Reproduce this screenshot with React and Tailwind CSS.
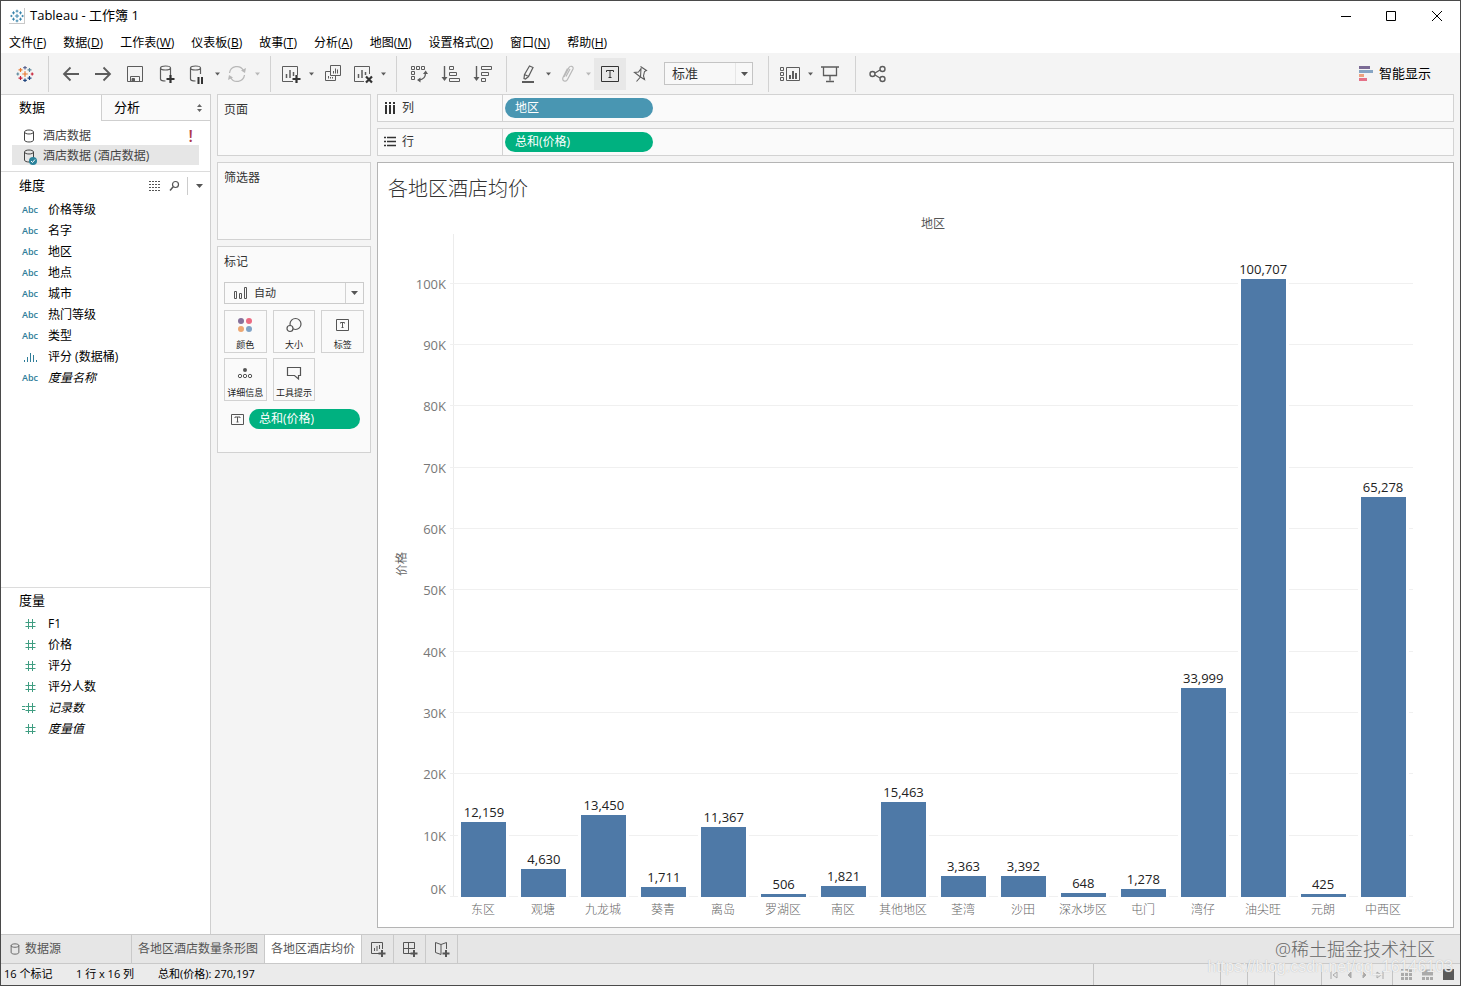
const MENUS = [
  ["文件", "F"],
  ["数据", "D"],
  ["工作表", "W"],
  ["仪表板", "B"],
  ["故事", "T"],
  ["分析", "A"],
  ["地图", "M"],
  ["设置格式", "O"],
  ["窗口", "N"],
  ["帮助", "H"],
];

const DIMENSIONS = [
  { name: "价格等级", type: "abc" },
  { name: "名字", type: "abc" },
  { name: "地区", type: "abc" },
  { name: "地点", type: "abc" },
  { name: "城市", type: "abc" },
  { name: "热门等级", type: "abc" },
  { name: "类型", type: "abc" },
  { name: "评分 (数据桶)", type: "bin" },
  { name: "度量名称", type: "abc", italic: true },
];

const MEASURES = [
  { name: "F1", type: "num" },
  { name: "价格", type: "num" },
  { name: "评分", type: "num" },
  { name: "评分人数", type: "num" },
  { name: "记录数", type: "calc", italic: true },
  { name: "度量值", type: "num", italic: true },
];

const DATA = [
  { area: "东区", price: 12159 },
  { area: "观塘", price: 4630 },
  { area: "九龙城", price: 13450 },
  { area: "葵青", price: 1711 },
  { area: "离岛", price: 11367 },
  { area: "罗湖区", price: 506 },
  { area: "南区", price: 1821 },
  { area: "其他地区", price: 15463 },
  { area: "荃湾", price: 3363 },
  { area: "沙田", price: 3392 },
  { area: "深水埗区", price: 648 },
  { area: "屯门", price: 1278 },
  { area: "湾仔", price: 33999 },
  { area: "油尖旺", price: 100707 },
  { area: "元朗", price: 425 },
  { area: "中西区", price: 65278 },
];

const AXIS_MAX = 108100;
const TICKS = [0, 10, 20, 30, 40, 50, 60, 70, 80, 90, 100];

const percent = (value) => `${(value / AXIS_MAX) * 100}%`;

function Svg({ size = 20, className = "", children }) {
  return (
    <svg
      width={size}
      height={size}
      viewBox={`0 0 ${size} ${size}`}
      fill="none"
      stroke="currentColor"
      className={`shrink-0 ${className}`}
      aria-hidden="true"
    >
      {children}
    </svg>
  );
}

// [x, y, arm length, colour index]
const PLUSES = [
  [10, 10, 3, 0],
  [5, 5.5, 2.2, 1],
  [15, 5.5, 2.2, 2],
  [5, 14.5, 2.2, 3],
  [15, 14.5, 2.2, 4],
  [10, 3, 2, 5],
  [10, 17, 2, 4],
  [2, 10, 1.6, 2],
  [18, 10, 1.6, 3],
];

function TableauLogo({ size, colors }) {
  return (
    <svg width={size} height={size} viewBox="0 0 20 20" fill="none" aria-hidden="true">
      {PLUSES.map(([x, y, r, c]) => (
        <path key={`${x}-${y}`} d={`M${x - r} ${y}h${2 * r}M${x} ${y - r}v${2 * r}`} stroke={colors[c]} strokeWidth="1.3" />
      ))}
    </svg>
  );
}

function Caret({ className = "" }) {
  return (
    <svg width="7" height="4" viewBox="0 0 7 4" className={className} aria-hidden="true">
      <path d="M0 0h7L3.5 4z" fill="currentColor" />
    </svg>
  );
}

function Cylinder({ className = "" }) {
  return (
    <Svg size={14} className={className}>
      <path d="M2.5 3v8c0 1.2 2 2 4.5 2s4.5-.8 4.5-2V3c0-1.2-2-2-4.5-2S2.5 1.800 2.5 3zM2.5 3c0 1.2 2 2 4.5 2s4.5-.8 4.5-2" />
    </Svg>
  );
}

const icons = {
  back: <path d="M18 10H3M9.5 3.5L3 10l6.5 6.5" strokeWidth="1.8" />,
  forward: <path d="M2 10h15M10.5 3.5L17 10l-6.5 6.5" strokeWidth="1.8" />,
  save: (
    <>
      <path d="M2.5 2.5h15v15h-15zM5.5 17.5v-5h9v5" />
      <path d="M7 14.5h2.5v3H7z" fill="currentColor" />
    </>
  ),
  addData: (
    <>
      <path d="M8.5 17C5 17 3.5 16 3.5 15V4M13.5 4v7M3.5 4c0-1.3 2.2-2 5-2s5 .7 5 2-2.2 2-5 2-5-.7-5-2z" strokeWidth="1.2" />
      <path d="M13.5 11v8M9.5 15h8" stroke="#333" strokeWidth="2.2" />
    </>
  ),
  pauseData: (
    <>
      <path d="M8.5 17C5 17 3.5 16 3.5 15V4M13.5 4v6M3.5 4c0-1.3 2.2-2 5-2s5 .7 5 2-2.2 2-5 2-5-.7-5-2z" strokeWidth="1.2" />
      <path d="M11.5 13v7M15 13v7" stroke="#333" strokeWidth="2" />
    </>
  ),
  refresh: (
    <>
      <path d="M2.5 9a7.5 7.5 0 0 1 14-2.5M17.5 11a7.5 7.5 0 0 1-14 2.5" strokeWidth="1.3" />
      <path d="M19 4l-1 5-4-2.5zM1 16l1-5 4 2.5z" fill="currentColor" stroke="none" />
    </>
  ),
  newSheet: (
    <>
      <path d="M12 17.5H1.5v-15h15V11" />
      <path d="M5.5 10v4M9 6v8M12.5 8v4" strokeWidth="1.5" />
      <path d="M15.5 11v8M11.5 15h8" stroke="#333" strokeWidth="2.2" />
    </>
  ),
  duplicate: (
    <>
      <path d="M7.5 1.5h10v10h-10zM7.5 7.5h-5v9h10v-5" />
      <path d="M10.5 7v2.5M12.5 4.5v5M14.5 5.5v4M5.5 12v2.5M7.5 13v1.5M9.5 13v1.5" />
    </>
  ),
  clearSheet: (
    <>
      <path d="M11 17.5H1.5v-15h15V10" />
      <path d="M5.5 10v4M9 6v8M12.5 8v3" strokeWidth="1.5" />
      <path d="M13 12.5l6 6M19 12.5l-6 6" stroke="#333" strokeWidth="2.2" />
    </>
  ),
  swap: (
    <>
      <path d="M2.5 2.5h3v3h-3zM7.5 2.5h3v3h-3zM12.5 2.5h3v3h-3zM2.5 7.5h3v3h-3zM2.5 12.5h3v3h-3z" />
      <path d="M16.5 9c0 4-2 6.5-6.5 7" strokeWidth="1.3" />
      <path d="M14 10l2.7-3.5L19 10zM11.5 13.5L8 16l3.5 2.5z" fill="currentColor" stroke="none" />
    </>
  ),
  sortAsc: (
    <>
      <path d="M3.5 2v13" strokeWidth="1.4" />
      <path d="M.5 13h6l-3 4z" fill="currentColor" stroke="none" />
      <path d="M8.5 2.5h4v3h-4zM8.5 8.5h7v3h-7zM8.5 14.5h10v3h-10z" />
    </>
  ),
  sortDesc: (
    <>
      <path d="M3.5 2v13" strokeWidth="1.4" />
      <path d="M.5 13h6l-3 4z" fill="currentColor" stroke="none" />
      <path d="M8.5 2.5h10v3h-10zM8.5 8.5h7v3h-7zM8.5 14.5h4v3h-4z" />
    </>
  ),
  highlight: (
    <>
      <path d="M6.5 10.5l5-8.5 3.5 1.5-4.5 9-3 2.5-1.5-.5zM6.5 10.5l4 2" strokeWidth="1.2" />
      <path d="M4 18h12" strokeWidth="2" />
    </>
  ),
  clip: (
    <path d="M6 13l5-9.5c1-2 5-1.5 4 1.5L9.5 15.5c-1.5 3-6 1.5-4.5-2l4.5-9M8 12.5l4-7.5" strokeWidth="1.2" />
  ),
  label: (
    <>
      <path d="M1.5 2.5h17v15h-17z" stroke="#333" />
      <path d="M6.5 8V6.500h7V8M10 6.500v7M8.500 13.500h3" stroke="#333" />
    </>
  ),
  pin: <path d="M10.500 2.500l6 4-2 1-1 4.500 1 3.500-4-2.500-4 4.500M10.500 13L4.500 8.500l4-.5 2.500-3.500z" strokeWidth="1.1" />,
  cards: (
    <>
      <path d="M.5 3.5h3v3h-3zM.5 8.5h3v3h-3zM.5 13.5h3v3h-3zM6.5 3.5h13v13h-13z" />
      <path d="M10 11v4M13 7v8M16 9v6" strokeWidth="2" />
    </>
  ),
  present: <path d="M1 3h18M3.5 3.5v8h13v-8M10 11.5v5M6 17.5h8" strokeWidth="1.3" />,
  share: (
    <g strokeWidth="1.4">
      <circle cx="4.5" cy="10" r="2.5" />
      <circle cx="14.5" cy="5" r="2.5" />
      <circle cx="14.5" cy="15" r="2.5" />
      <path d="M7 9l5-3M7 11l5 3" />
    </g>
  ),
};

function ToolButton({ icon, label, caret, faded, active, wide }) {
  const tone = faded ? "text-[#b8b8b8]" : "text-[#5c5c5c]";
  return (
    <>
      <button
        type="button"
        aria-label={label}
        className={`flex h-8 items-center justify-center ${wide ? "w-8" : "w-7"} ${tone} ${active ? "bg-[#e8e8e8]" : ""}`}
      >
        <Svg>{icons[icon]}</Svg>
      </button>
      {caret && (
        <button type="button" aria-label={`${label}选项`} className={`flex h-8 w-3 items-center justify-center ${tone}`}>
          <Caret className="w-[5px]" />
        </button>
      )}
    </>
  );
}

function ToolGroup({ children, className = "" }) {
  return <div className={`flex h-9 items-center border-l border-[#d2d2d2] ${className}`}>{children}</div>;
}

function TitleBar() {
  return (
    <header className="flex h-[30px] items-center bg-white pl-2">
      <span className="flex size-4 items-center justify-center border-r border-b border-[#c8c8c8]">
        <TableauLogo size={14} colors={["#2f7fa8", "#2f7fa8", "#2f7fa8", "#2f7fa8", "#2f7fa8", "#2f7fa8"]} />
      </span>
      <h1 className="ml-[5px] flex-1 text-[13px] text-black">Tableau - 工作簿 1</h1>
      <div className="flex text-black">
        <button type="button" aria-label="最小化" className="flex h-7 w-[45px] items-center justify-center">
          <Svg size={12}><path d="M1 6.5h10" /></Svg>
        </button>
        <button type="button" aria-label="最大化" className="flex h-7 w-[45px] items-center justify-center">
          <Svg size={12}><path d="M1.5 1.5h9v9h-9z" /></Svg>
        </button>
        <button type="button" aria-label="关闭" className="flex h-7 w-[47px] items-center justify-center">
          <Svg size={12}><path d="M1 1l10 10M11 1L1 11" /></Svg>
        </button>
      </div>
    </header>
  );
}

function MenuBar() {
  return (
    <nav className="flex h-[22px] items-center gap-[17px] bg-white pt-0.5 pl-2 text-xs text-black">
      {MENUS.map(([name, key]) => (
        <button key={key} type="button">
          {name}(<u>{key}</u>)
        </button>
      ))}
    </nav>
  );
}

function Toolbar() {
  return (
    <div className="flex h-[41px] items-center bg-[#f4f4f4]">
      <button type="button" aria-label="起始页" className="flex h-8 w-[47px] items-center justify-center">
        <TableauLogo size={18} colors={["#e8762d", "#e8762d", "#5b879b", "#c72037", "#1f447e", "#5c6692"]} />
      </button>
      <ToolGroup className="pr-[7px] pl-1.5">
        <ToolButton icon="back" label="撤消" wide />
        <ToolButton icon="forward" label="重做" wide />
        <ToolButton icon="save" label="保存" wide />
        <ToolButton icon="addData" label="新建数据源" wide />
        <ToolButton icon="pauseData" label="暂停自动更新" caret />
        <ToolButton icon="refresh" label="运行更新" caret faded />
      </ToolGroup>
      <ToolGroup className="pr-[7px] pl-1.5">
        <ToolButton icon="newSheet" label="新建工作表" caret />
        <ToolButton icon="duplicate" label="复制" wide />
        <ToolButton icon="clearSheet" label="清除工作表" caret />
      </ToolGroup>
      <ToolGroup className="pr-[7px] pl-1.5">
        <ToolButton icon="swap" label="交换行和列" wide />
        <ToolButton icon="sortAsc" label="升序排序" wide />
        <ToolButton icon="sortDesc" label="降序排序" wide />
      </ToolGroup>
      <ToolGroup className="pr-[15px] pl-[7px]">
        <ToolButton icon="highlight" label="突出显示" caret />
        <ToolButton icon="clip" label="组成员" caret faded />
        <ToolButton icon="label" label="显示标记标签" active wide />
        <ToolButton icon="pin" label="固定轴" />
        <div className="relative ml-2.5">
          <select
            aria-label="适合"
            className="block h-[23px] w-[89px] appearance-none border border-[#c4c4c4] bg-[#f8f8f8] pb-0.5 pl-[7px] text-[13px] leading-5 text-[#333]"
          >
            <option>标准</option>
          </select>
          <span className="pointer-events-none absolute inset-y-px right-px flex w-[17px] items-center justify-center border-l border-[#e6e6e6] text-[#555]">
            <Caret />
          </span>
        </div>
      </ToolGroup>
      <ToolGroup className="pr-[11px] pl-[7px]">
        <ToolButton icon="cards" label="显示/隐藏卡" caret />
        <ToolButton icon="present" label="演示模式" />
      </ToolGroup>
      <ToolGroup className="px-1.5">
        <ToolButton icon="share" label="共享" wide />
      </ToolGroup>
      <button type="button" className="mr-[29px] ml-auto flex items-center gap-1.5 text-[13px] text-black">
        <svg width="14" height="15" viewBox="0 0 14 15" aria-hidden="true">
          <path d="M0 0h11v3H0z" fill="#7b6b95" />
          <path d="M0 4h14v3H0z" fill="#86a5c4" />
          <path d="M0 8h5v3H0z" fill="#eda27f" />
          <path d="M0 12h8v3H0z" fill="#e57288" />
        </svg>
        智能显示
      </button>
    </div>
  );
}

function FieldIcon({ type }) {
  if (type === "abc") {
    return <span className="w-5 text-center text-[9px] font-semibold text-[#2f7d99]">Abc</span>;
  }
  if (type === "bin") {
    return (
      <span className="flex w-5 justify-center text-[#2f7d99]">
        <Svg size={14}>
          <path d="M1.5 10v2M4.500 7v5M7.500 3v9M10.500 5v7M13.500 10v2" />
        </Svg>
      </span>
    );
  }
  return (
    <span className="flex w-5 justify-center text-[#3f9d81]">
      <Svg size={14} className="overflow-visible">
        <path d="M5.500 2v10M9.500 2v10M2.500 5.500h10M2.500 9.500h10" />
        {type === "calc" && <path d="M-1 5.500h3M-1 8.500h3" />}
      </Svg>
    </span>
  );
}

function FieldList({ fields }) {
  return (
    <ul className="pl-[19px]">
      {fields.map((field) => (
        <li key={field.name} className="flex h-[21px] items-center gap-2 text-xs text-black">
          <FieldIcon type={field.type} />
          <span className={field.italic ? "italic" : ""}>{field.name}</span>
        </li>
      ))}
    </ul>
  );
}

function DataPane() {
  return (
    <aside className="flex w-[210px] shrink-0 flex-col border-r border-[#cfcfcf] bg-white">
      <div className="flex h-[27px] border-t border-[#d4d4d4] text-[13px] text-black">
        <button type="button" className="w-[100px] pl-[18px] text-left">数据</button>
        <button type="button" className="flex flex-1 items-center justify-between border-b border-l border-[#cfcfcf] bg-[#fafafa] pr-2 pl-3">
          分析
          <svg width="5" height="8" viewBox="0 0 5 8" fill="#666" aria-hidden="true">
            <path d="M0 3h5L2.5 0zM0 5h5L2.5 8z" />
          </svg>
        </button>
      </div>
      <ul className="border-b border-[#dcdcdc] pt-1 pr-[11px] pb-1.5 pl-[11px] text-xs text-[#444]">
        <li className="flex h-5 items-center gap-[7px] pt-0.5 pl-2.5">
          <Cylinder />
          酒店数据
          <span className="mr-1.5 ml-auto text-base leading-4 font-semibold text-[#b03a4a]">!</span>
        </li>
        <li className="flex h-5 items-center gap-[7px] bg-[#e6e6e6] pt-0.5 pl-2.5">
          <span className="relative">
            <Cylinder />
            <svg width="8" height="8" viewBox="0 0 8 8" className="absolute -right-px -bottom-0.5" aria-hidden="true">
              <circle cx="4" cy="4" r="4" fill="#2b839c" />
              <path d="M2 4l1.5 1.5L6 2.5" fill="none" stroke="#fff" />
            </svg>
          </span>
          酒店数据 (酒店数据)
        </li>
      </ul>
      <section className="min-h-[260px] flex-1">
        <div className="flex h-[27px] items-center pr-[7px] pl-[18px] text-[#555]">
          <h2 className="flex-1 text-[13px] text-black">维度</h2>
          <button type="button" aria-label="查看数据">
            <Svg size={12}>
              <path d="M0 1.5h12M0 4.5h12M0 7.5h12M0 10.5h12" strokeDasharray="2 1" />
            </Svg>
          </button>
          <button type="button" aria-label="查找字段" className="ml-2">
            <Svg size={12}>
              <circle cx="6.500" cy="4.500" r="3" strokeWidth="1.2" />
              <path d="M4 7L1 10.500" strokeWidth="1.5" />
            </Svg>
          </button>
          <button type="button" aria-label="字段菜单" className="ml-1.5 flex h-[18px] items-center border-l border-[#ccc] pl-2">
            <Caret />
          </button>
        </div>
        <FieldList fields={DIMENSIONS} />
      </section>
      <section className="h-[347px] border-t border-[#dcdcdc]">
        <h2 className="flex h-[25px] items-center pl-[18px] text-[13px] text-black">度量</h2>
        <FieldList fields={MEASURES} />
      </section>
    </aside>
  );
}

function Card({ title, className = "", children }) {
  return (
    <section className={`border border-[#d2d2d2] bg-[#fafafa] px-1.5 pt-[7px] ${className}`}>
      <h2 className="text-xs leading-4 text-[#333]">{title}</h2>
      {children}
    </section>
  );
}

function MarkButton({ label, children }) {
  return (
    <button type="button" className="flex h-[43px] flex-col items-center justify-between border border-[#d2d2d2] pt-1 text-[#555]">
      <Svg>{children}</Svg>
      <span className="text-[9px] leading-[14px] whitespace-nowrap text-[#222]">{label}</span>
    </button>
  );
}

function SmallLabelIcon() {
  return (
    <Svg size={13}>
      <path d="M.5 1.5h12v10H.5z" />
      <path d="M4 5V4h5v1M6.5 4v5M5.5 9h2" />
    </Svg>
  );
}

function MarksCard() {
  return (
    <Card title="标记" className="h-[207px]">
      <div className="relative mt-3">
        <select
          aria-label="标记类型"
          className="block h-[22px] w-full appearance-none border border-[#cbcbcb] bg-[#fafafa] pl-[29px] text-[11px] leading-4 text-[#333]"
        >
          <option>自动</option>
        </select>
        <Svg size={14} className="pointer-events-none absolute top-1 left-[9px] text-[#555]">
          <path d="M1.5 5.5h2v7h-2zM6.5 7.5h2v5h-2zM11.5 1.5h2v11h-2z" />
        </Svg>
        <span className="pointer-events-none absolute inset-y-px right-px flex w-[18px] items-center justify-center border-l border-[#d2d2d2] text-[#555]">
          <Caret />
        </span>
      </div>
      <div className="mt-1.5 grid grid-cols-3 gap-x-1.5 gap-y-[5px]">
        <MarkButton label="颜色">
          <g stroke="none">
            <circle cx="6" cy="6" r="3" fill="#86709a" />
            <circle cx="14" cy="6" r="3" fill="#ec6b82" />
            <circle cx="6" cy="14" r="3" fill="#eda873" />
            <circle cx="14" cy="14" r="3" fill="#7fa3c7" />
          </g>
        </MarkButton>
        <MarkButton label="大小">
          <circle cx="11.5" cy="9" r="5.5" strokeWidth="1.2" />
          <circle cx="6" cy="13.5" r="3" fill="#fafafa" strokeWidth="1.2" />
        </MarkButton>
        <MarkButton label="标签">
          <path d="M3.5 4.5h12v11h-12z" />
          <path d="M7.5 8.5v-1h4v1M9.5 7.5v5M8.5 12.5h2" />
        </MarkButton>
        <MarkButton label="详细信息">
          <circle cx="10" cy="7" r="2" fill="currentColor" stroke="none" />
          <circle cx="5" cy="13" r="1.7" />
          <circle cx="10" cy="13" r="1.7" />
          <circle cx="15" cy="13" r="1.7" />
        </MarkButton>
        <MarkButton label="工具提示">
          <path d="M3.5 4.5h13v8h-2v3.5l-4-3.5h-7z" strokeWidth="1.2" />
        </MarkButton>
      </div>
      <div className="mt-2 flex items-center gap-[5px] pl-[7px] text-[#555]">
        <SmallLabelIcon />
        <button type="button" className="h-5 w-[111px] rounded-full bg-[#00b180] pl-2.5 text-left text-xs text-white">
          总和(价格)
        </button>
      </div>
    </Card>
  );
}

function Shelf({ icon, name, pill, pillClass }) {
  return (
    <div className="flex h-7 items-center border border-[#d2d2d2] bg-[#fafafa]">
      <div className="flex h-full w-[125px] items-center gap-1.5 border-r border-[#d2d2d2] pl-1.5 text-xs text-[#333]">
        {icon}
        {name}
      </div>
      <button type="button" className={`ml-0.5 h-5 w-[148px] rounded-full pl-2.5 text-left text-xs text-white ${pillClass}`}>
        {pill}
      </button>
    </div>
  );
}

function BarChart() {
  return (
    <div className="flex flex-1 pr-10">
      <div className="flex w-12 items-center justify-center pb-8">
        <span className="rotate-180 text-xs leading-4 text-[#666] [text-orientation:sideways] [writing-mode:vertical-rl]">价格</span>
      </div>
      <div className="relative mb-[30px] w-[27px]">
        {TICKS.map((tick) => (
          <span
            key={tick}
            className={`absolute right-[7px] text-[13px] leading-4 text-[#787878] ${tick === 0 ? "" : "translate-y-1/2"}`}
            style={{ bottom: percent(tick * 1000) }}
          >
            {tick}K
          </span>
        ))}
      </div>
      <div className="flex min-w-0 flex-1 flex-col">
        <div className="relative min-h-[400px] flex-1 border-l border-[#ececec]">
          {TICKS.map((tick) => (
            <div
              key={tick}
              className="absolute right-0 -left-1 border-t border-[#f0f0f0]"
              style={{ bottom: percent(tick * 1000) }}
            />
          ))}
          <div className="absolute inset-0 flex">
            {DATA.map(({ area, price }) => (
              <div key={area} className="flex h-full flex-1 flex-col items-center justify-end">
                <span className="pb-0.5 text-[13px] leading-4 text-[#222]">{price.toLocaleString("en-US")}</span>
                <div className="w-3/4 shrink-0 bg-[#4e79a7] ring-3 ring-white" style={{ height: percent(price) }} />
              </div>
            ))}
          </div>
        </div>
        <div className="flex h-[30px] pt-[5px]">
          {DATA.map(({ area }) => (
            <span key={area} className="flex-1 text-center text-xs leading-4 font-light whitespace-nowrap text-[#666]">
              {area}
            </span>
          ))}
        </div>
      </div>
    </div>
  );
}

function Worksheet() {
  return (
    <div className="flex min-w-0 flex-1 flex-col gap-1.5">
      <Shelf
        name="列"
        pill="地区"
        pillClass="bg-[#4996b2]"
        icon={
          <Svg size={12}>
            <path d="M2 0v2M6 0v2M10 0v2M2 3v9M6 3v9M10 3v9" strokeWidth="2" />
          </Svg>
        }
      />
      <Shelf
        name="行"
        pill="总和(价格)"
        pillClass="bg-[#00b180]"
        icon={
          <Svg size={12}>
            <path d="M0 1.500h2M0 5.500h2M0 9.500h2M3 1.500h9M3 5.500h9M3 9.500h9" strokeWidth="1.5" />
          </Svg>
        }
      />
      <main className="flex flex-1 flex-col border border-[#b4b4b4] bg-white">
        <h2 className="pt-[11px] pl-2.5 text-xl leading-[30px] font-light text-[#333]">各地区酒店均价</h2>
        <div className="mt-3 pr-10 pl-[75px] text-center text-xs leading-4 text-[#555]">地区</div>
        <div className="mt-0.5 flex flex-1">
          <BarChart />
        </div>
      </main>
    </div>
  );
}

function SheetTabs() {
  const addButton = "flex w-8 items-center justify-center border-r border-[#c9c9c9]";
  return (
    <div className="flex h-[30px] border-y border-[#c9c9c9] bg-[#e6e6e6] text-xs text-[#555]">
      <button type="button" className="flex w-[131px] items-center gap-1 border-r border-[#c9c9c9] pl-2">
        <Cylinder className="size-3" />
        数据源
      </button>
      <button type="button" className="border-r border-[#c9c9c9] px-1.5">各地区酒店数量条形图</button>
      <button type="button" className="border-r border-[#c9c9c9] bg-white px-1.5">各地区酒店均价</button>
      <button type="button" aria-label="新建工作表" className={addButton}>
        <Svg size={16}>
          <path d="M10 12.5H1.5v-11h11V8" />
          <path d="M4.5 7v3M7 5v5M9.5 4v4" />
          <path d="M12 9v7M8.5 12.5h7" strokeWidth="2" />
        </Svg>
      </button>
      <button type="button" aria-label="新建仪表板" className={addButton}>
        <Svg size={16}>
          <path d="M9 12.5H1.5v-11h11V8M1.5 7.5h11M6.5 1.5v11" />
          <path d="M12 9v7M8.5 12.5h7" strokeWidth="2" />
        </Svg>
      </button>
      <button type="button" aria-label="新建故事" className={addButton}>
        <Svg size={16}>
          <path d="M7 13.5l-5.5-2v-10l5.5 2 5.5-2V8M7 3.5v10" />
          <path d="M12 9v7M8.5 12.5h7" strokeWidth="2" />
        </Svg>
      </button>
    </div>
  );
}

function StatusBar() {
  return (
    <footer className="flex h-[21px] items-center bg-[#ebebeb] pl-[3px] text-[11px] text-black">
      <span className="w-[72px]">16 个标记</span>
      <span className="w-[82px]">1 行 x 16 列</span>
      <span>总和(价格): 270,197</span>
      <div className="ml-auto flex h-[21px] text-[#aaa]">
        <span className="w-[127px] border-l border-[#c4c4c4]" />
        <span className="w-[27px] border-l border-[#c4c4c4]" />
        <span className="w-[27px] border-l border-[#c4c4c4]" />
        <span className="w-[47px] border-l border-[#c4c4c4]" />
        <div className="flex w-[71px] items-center justify-around border-l border-[#c4c4c4] px-1">
          <button type="button" aria-label="第一张"><Svg size={8}><path d="M1 0v8M7 1L3 4l4 3z" /></Svg></button>
          <button type="button" aria-label="上一张"><Svg size={8}><path d="M6 1L3 4l3 3z" fill="currentColor" /></Svg></button>
          <button type="button" aria-label="下一张"><Svg size={8}><path d="M2 1l3 3-3 3z" fill="currentColor" /></Svg></button>
          <button type="button" aria-label="最后一张"><Svg size={8}><path d="M7 0v8M1 1l4 3-4 3z" /></Svg></button>
        </div>
        <div className="flex items-center gap-2.5 border-l border-[#c4c4c4] pr-1.5 pl-2">
          <button type="button" aria-label="显示选项卡">
            <Svg size={11}><path d="M0 1.500h11M0 5.500h11M0 9.500h11" strokeWidth="3" strokeDasharray="3 1" /></Svg>
          </button>
          <button type="button" aria-label="显示胶片">
            <Svg size={11}><path d="M0 3.500h11" strokeWidth="6" /><path d="M0 9.500h11" strokeWidth="3" strokeDasharray="3 1" /></Svg>
          </button>
          <button type="button" aria-label="显示工作表" className="size-[11px] bg-[#5a5a5a]" />
        </div>
      </div>
    </footer>
  );
}

function App() {
  return (
    <div className="relative flex min-h-screen flex-col border border-[#4a4a4a] bg-[#f4f4f4] font-['Open_Sans','Noto_Sans_CJK_SC',sans-serif]">
      <TitleBar />
      <MenuBar />
      <Toolbar />
      <div className="flex flex-1">
        <DataPane />
        <div className="flex flex-1 gap-1.5 px-1.5 pb-1.5">
          <div className="flex w-[154px] shrink-0 flex-col gap-1.5">
            <Card title="页面" className="h-[62px]" />
            <Card title="筛选器" className="h-[78px]" />
            <MarksCard />
          </div>
          <Worksheet />
        </div>
      </div>
      <SheetTabs />
      <StatusBar />
      <div className="pointer-events-none absolute right-[7px] bottom-2.5 flex flex-col items-end whitespace-nowrap">
        <span className="pr-[18px] text-lg leading-5 font-light text-[#666]">@稀土掘金技术社区</span>
        <span className="font-['Liberation_Sans',sans-serif] text-base leading-4 text-white/80 [text-shadow:0_0_1px_#aaa]">
          https://blog.csdn.net/qq_16146103
        </span>
      </div>
    </div>
  );
}

export default App;
